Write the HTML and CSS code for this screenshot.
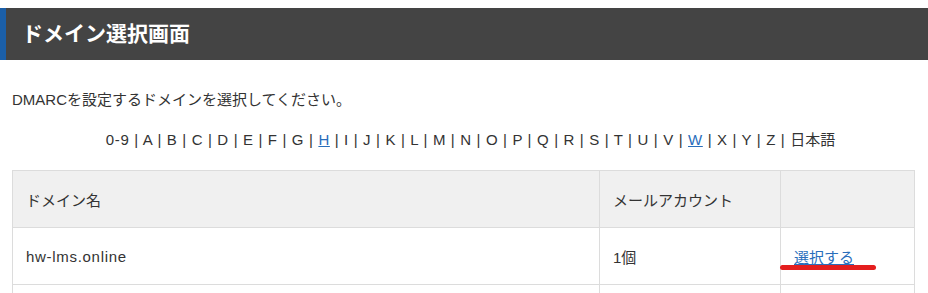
FILE: index.html
```html
<!DOCTYPE html>
<html lang="ja">
<head>
  <meta charset="UTF-8" />
  <title>ドメイン選択画面</title>
  <link rel="stylesheet" href="styles.css">
</head>
<body>
  <!-- Page Title -->
  <h1 class="page-title">ドメイン選択画面</h1>

  <div class="content">
    <p class="lead">DMARCを設定するドメインを選択してください。</p>

    <!-- Index Filter -->
    <div class="index-nav">
      <span>0-9</span> | <span>A</span> | <span>B</span> | <span>C</span> | <span>D</span> | <span>E</span> | <span>F</span> | <span>G</span> | <a href="#">H</a> | <span>I</span> | <span>J</span> | <span>K</span> | <span>L</span> | <span>M</span> | <span>N</span> | <span>O</span> | <span>P</span> | <span>Q</span> | <span>R</span> | <span>S</span> | <span>T</span> | <span>U</span> | <span>V</span> | <a href="#">W</a> | <span>X</span> | <span>Y</span> | <span>Z</span> | <span class="ja">日本語</span>
    </div>

    <!-- Domain Table -->
    <table class="domain-table">
      <thead>
        <tr>
          <th class="col-domain">ドメイン名</th>
          <th class="col-count">メールアカウント</th>
          <th class="col-action"></th>
        </tr>
      </thead>
      <tbody>
        <tr>
          <td class="domain-name">hw-lms.online</td>
          <td>1個</td>
          <td class="action-cell"><a href="#">選択する</a><span class="mark"></span></td>
        </tr>
        <tr>
          <td></td>
          <td></td>
          <td></td>
        </tr>
      </tbody>
    </table>
  </div>
</body>
</html>
```

FILE: styles.css
```css
/* Base */
* { margin: 0; padding: 0; box-sizing: border-box; }
body {
  font-family: 'Liberation Sans', 'Noto Sans CJK JP', sans-serif;
  font-size: 15px;
  color: #333;
  background: #fff;
  overflow: hidden;
}
a { color: #2a6ebb; }

/* Title Bar */
.page-title {
  margin-top: 8px;
  height: 52px;
  line-height: 52px;
  padding-left: 16px;
  background: #444;
  border-left: 6px solid #1b5fa8;
  color: #fff;
  font-size: 21px;
  font-weight: bold;
}

.content {
  padding: 0 13px 0 12px;
}
.lead {
  margin-top: 30px;
  line-height: 20px;
}

/* Index Filter */
.index-nav {
  margin-top: 20px;
  height: 20px;
  line-height: 20px;
  text-align: center;
  padding-left: 14px;
  letter-spacing: 0.65px;
}
.index-nav .ja { letter-spacing: 0; }

/* Table */
.domain-table {
  margin-top: 20px;
  width: 100%;
  border-collapse: collapse;
}
.domain-table th,
.domain-table td {
  border: 1px solid #dcdcdc;
  height: 57px;
  padding: 0 13px;
  text-align: left;
  font-weight: normal;
  vertical-align: middle;
}
.domain-table th {
  background: #f0f0f0;
}
.domain-table .domain-name { letter-spacing: 0.7px; }
.col-domain { width: 587px; }
.col-count { width: 181px; }
.action-cell { position: relative; }

/* Hand-drawn annotation under the link */
.mark {
  position: absolute;
  left: -1px;
  top: 37px;
  width: 96px;
  height: 5px;
  border-radius: 3px;
  background: #e41e1e;
}
```
